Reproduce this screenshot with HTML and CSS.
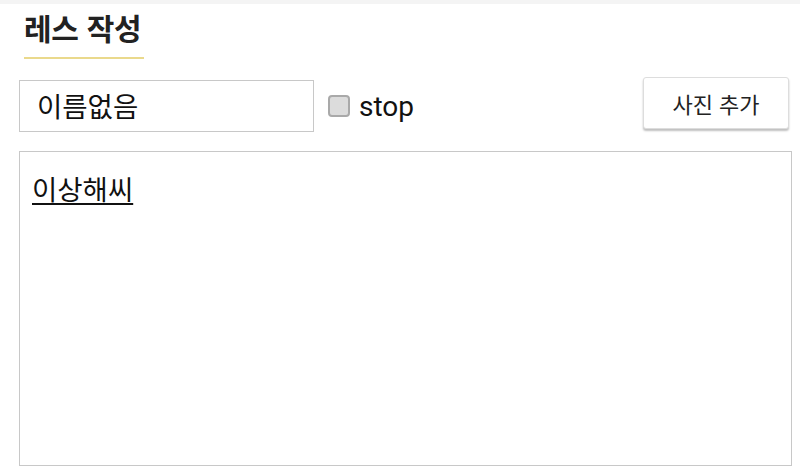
FILE: index.html
```html
<!DOCTYPE html>
<html lang="ko">
<head>
<meta charset="utf-8">
<link rel="stylesheet" href="styles.css">
</head>
<body>
<div class="topstrip"></div>
<div class="head">
  <h1 class="title">레스 작성</h1>
</div>
<div class="row">
  <div class="name">이름없음</div>
  <label class="stop"><span class="box"></span><span class="stoptext">stop</span></label>
  <div class="spacer"></div>
  <button class="addphoto">사진 추가</button>
</div>
<div class="body"><span class="content">이상해씨</span></div>
</body>
</html>
```
FILE: styles.css
```css
html, body {
  margin: 0;
  padding: 0;
  background: #fff;
  font-family: Roboto, "Noto Sans CJK KR", sans-serif;
  color: #111;
}
.topstrip {
  height: 4px;
  background: #f4f4f4;
}
.head {
  padding-left: 24px;
  height: 54px;
}
.title {
  display: inline-block;
  margin: 0;
  font-family: "Noto Sans CJK KR", sans-serif;
  font-size: 30px;
  font-weight: 700;
  line-height: 40px;
  padding-top: 3px;
  padding-bottom: 10px;
  color: #222;
  border-bottom: 2px solid #ead98c;
  width: 120px;
  white-space: nowrap;
  letter-spacing: -0.3px;
}
.row {
  display: flex;
  align-items: center;
  margin: 21px 11px 0 19px;
  height: 54px;
}
.name {
  box-sizing: border-box;
  width: 295px;
  height: 52px;
  border: 1px solid #c8c8c8;
  padding-left: 17px;
  font-family: "Noto Sans CJK KR", sans-serif;
  font-size: 27.5px;
  line-height: 49px;
  color: #111;
}
.stop {
  display: flex;
  align-items: center;
  margin-left: 14px;
}
.box {
  width: 18px;
  height: 18px;
  border: 2px solid #a9a9a9;
  border-radius: 4px;
  background: #dcdcdc;
}
.stoptext {
  margin-left: 9px;
  font-size: 28px;
  color: #111;
}
.spacer {
  flex: 1;
}
.addphoto {
  width: 146px;
  height: 52px;
  margin-top: -6px;
  background: #fff;
  border: 1px solid #ddd;
  border-radius: 3px;
  box-shadow: 0 2px 2px rgba(0,0,0,0.25);
  font-family: "Noto Sans CJK KR", sans-serif;
  font-size: 22px;
  color: #222;
  padding: 0;
}
.body {
  box-sizing: border-box;
  margin: 18px 8px 0 19px;
  height: 315px;
  border: 1px solid #c8c8c8;
  padding: 18px 12px;
  font-family: "Noto Sans CJK KR", sans-serif;
  font-size: 27.5px;
  line-height: 36px;
}
.content {
  text-decoration: underline;
  text-underline-offset: 3px;
  text-decoration-thickness: 2px;
}
```
